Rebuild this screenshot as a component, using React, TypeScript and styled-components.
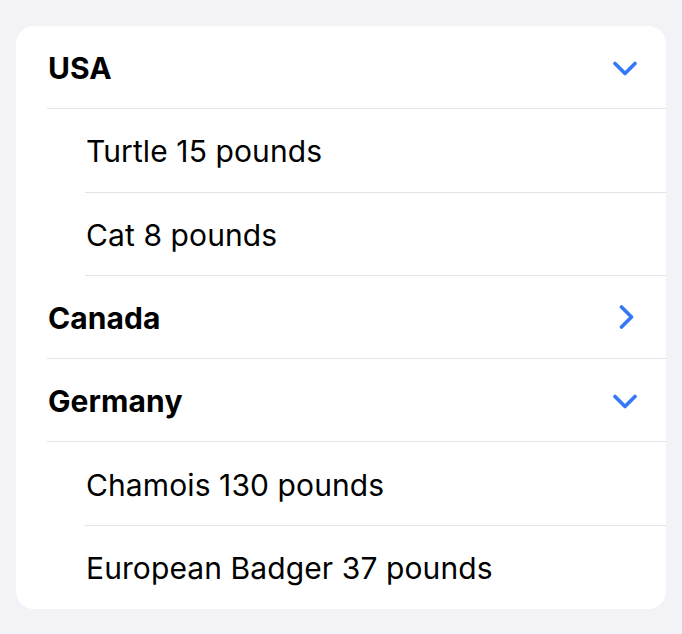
import React from "react";
import styled, { createGlobalStyle } from "styled-components";

const GlobalStyle = createGlobalStyle`
  html, body {
    margin: 0;
    padding: 0;
    background: #f2f2f7;
  }
  body {
    font-family: Inter, "Noto Sans", "Liberation Sans", sans-serif;
    -webkit-font-smoothing: antialiased;
  }
`;

const Page = styled.div`
  width: 682px;
  height: 634px;
  box-sizing: border-box;
  padding: 26px 16px 0 16px;
  background: #f2f2f7;
`;

const Card = styled.div`
  background: #ffffff;
  border-radius: 18px;
  overflow: hidden;
  display: flex;
  flex-direction: column;
  height: 583px;
`;

const Row = styled.div<{ $inset: number }>`
  flex: 1;
  display: flex;
  padding-left: ${(p) => p.$inset}px;
`;

const RowInner = styled.div<{ $last: boolean }>`
  flex: 1;
  display: flex;
  align-items: center;
  justify-content: space-between;
  padding-left: 1px;
  padding-right: 29px;
  border-bottom: ${(p) => (p.$last ? "none" : "1px solid #e3e3e8")};
`;

const Label = styled.span<{ $bold: boolean }>`
  font-size: 30px;
  line-height: 36px;
  padding-top: 2px;
  font-weight: ${(p) => (p.$bold ? 700 : 400)};
  color: #000000;
  letter-spacing: ${(p) => (p.$bold ? "0.1px" : "0.1px")};
`;

const Chevron = styled.svg<{ $down: boolean }>`
  width: 24px;
  height: 24px;
  display: block;
  margin-top: ${(p) => (p.$down ? "4px" : "0")};
`;

const ChevronDown = () => (
  <Chevron $down viewBox="0 0 24 24">
    <path
      d="M2 6.5 L12 16.5 L22 6.5"
      fill="none"
      stroke="#3478f6"
      strokeWidth="3.6"
      strokeLinecap="round"
      strokeLinejoin="round"
    />
  </Chevron>
);

const ChevronRight = () => (
  <Chevron $down={false} viewBox="0 0 24 24">
    <path
      d="M8.5 2 L18.5 12 L8.5 22"
      fill="none"
      stroke="#3478f6"
      strokeWidth="3.6"
      strokeLinecap="round"
      strokeLinejoin="round"
    />
  </Chevron>
);

type Item = { label: string; kind: "header" | "child"; open?: boolean };

const items: Item[] = [
  { label: "USA", kind: "header", open: true },
  { label: "Turtle 15 pounds", kind: "child" },
  { label: "Cat 8 pounds", kind: "child" },
  { label: "Canada", kind: "header", open: false },
  { label: "Germany", kind: "header", open: true },
  { label: "Chamois 130 pounds", kind: "child" },
  { label: "European Badger 37 pounds", kind: "child" },
];

export default function App() {
  return (
    <>
      <GlobalStyle />
      <Page>
        <Card>
          {items.map((it, i) => (
            <Row key={i} $inset={it.kind === "header" ? 31 : 69}>
              <RowInner $last={i === items.length - 1}>
                <Label $bold={it.kind === "header"}>{it.label}</Label>
                {it.kind === "header" &&
                  (it.open ? <ChevronDown /> : <ChevronRight />)}
              </RowInner>
            </Row>
          ))}
        </Card>
      </Page>
    </>
  );
}
